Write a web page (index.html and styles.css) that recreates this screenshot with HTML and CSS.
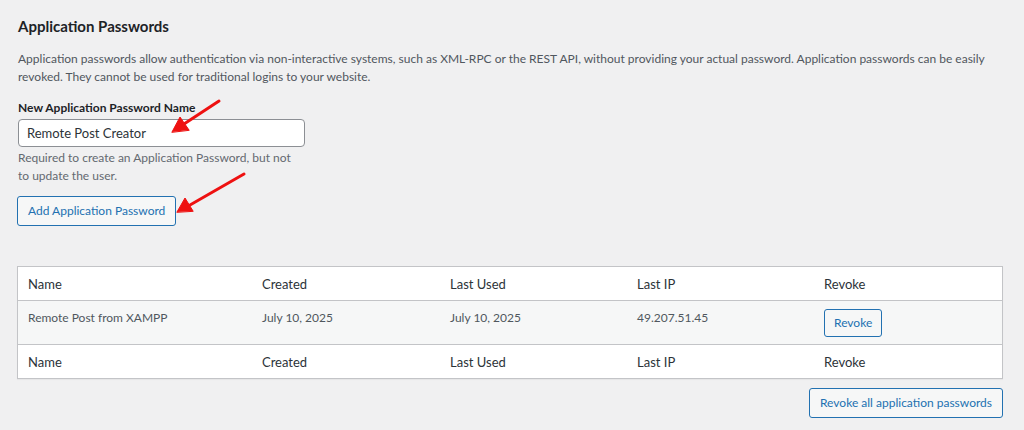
FILE: index.html
```html
<!DOCTYPE html>
<html>
<head>
<meta charset="utf-8">
<link rel="stylesheet" href="styles.css">
</head>
<body>
<div class="wrap">
  <h2 class="title">Application Passwords</h2>
  <p class="desc">Application passwords allow authentication via non-interactive systems, such as XML-RPC or the REST API, without providing your actual password. Application passwords can be easily revoked. They cannot be used for traditional logins to your website.</p>
  <div class="new-form">
    <label class="label">New Application Password Name</label>
    <div class="input">Remote Post Creator</div>
    <p class="help">Required to create an Application Password, but not to update the user.</p>
    <button class="btn">Add Application Password</button>
  </div>
  <table class="list">
    <thead>
      <tr><th class="c1">Name</th><th class="c2">Created</th><th class="c3">Last Used</th><th class="c4">Last IP</th><th class="c5">Revoke</th></tr>
    </thead>
    <tbody>
      <tr><td>Remote Post from XAMPP</td><td>July 10, 2025</td><td>July 10, 2025</td><td>49.207.51.45</td><td><button class="btn small">Revoke</button></td></tr>
    </tbody>
    <tfoot>
      <tr><th>Name</th><th>Created</th><th>Last Used</th><th>Last IP</th><th>Revoke</th></tr>
    </tfoot>
  </table>
  <div class="actions"><button class="btn">Revoke all application passwords</button></div>
</div>
<svg class="arrows" width="1024" height="430" viewBox="0 0 1024 430">
  <g stroke="#ee1111" stroke-width="3" stroke-linecap="round" fill="#ee1111">
    <line x1="219" y1="101" x2="184" y2="124"/>
    <polygon points="172,132 180,117 189,130" stroke-width="1"/>
    <line x1="244" y1="174" x2="190" y2="205"/>
    <polygon points="177,212 185,198 193,211" stroke-width="1"/>
  </g>
</svg>
</body>
</html>
```
FILE: styles.css
```css
html, body { margin: 0; padding: 0; }
body {
  background: #f0f0f1;
  font-family: Lato, "Noto Sans", sans-serif;
  font-size: 12px;
  color: #3c434a;
  width: 1024px;
  height: 430px;
  overflow: hidden;
  position: relative;
}
.wrap { padding: 0 22px 0 18px; }
.title {
  margin: 0;
  padding-top: 14px;
  font-size: 15px;
  font-weight: 700;
  color: #1d2327;
  line-height: 24px;
}
.desc {
  margin: 12px 0 0;
  line-height: 18px;
  color: #50575e;
}
.new-form { margin-top: 12px; }
.label {
  display: block;
  font-weight: 700;
  color: #1d2327;
  line-height: 20px;
}
.input {
  box-sizing: border-box;
  width: 287px;
  height: 28px;
  margin-top: 1px;
  border: 1px solid #8c8f94;
  border-radius: 4px;
  background: #fff;
  padding: 0 8px;
  line-height: 26px;
  font-size: 13px;
  color: #2c3338;
}
.help {
  margin: 2px 0 0;
  width: 285px;
  color: #646970;
  line-height: 18px;
}
.btn {
  box-sizing: border-box;
  font-family: inherit;
  font-size: 12px;
  color: #2271b1;
  border: 1px solid #2271b1;
  background: #f6f7f7;
  border-radius: 3px;
  padding: 0 10px;
  height: 30px;
  line-height: 28px;
  margin: 0;
  cursor: pointer;
  display: block;
}
.new-form .btn { margin-top: 11px; margin-left: -1px; }
.list {
  margin-top: 40px;
  margin-left: -1px;
  width: 986px;
  border-collapse: collapse;
  background: #fff;
  border: 1px solid #c3c4c7;
  box-shadow: 0 1px 1px rgba(0,0,0,.04);
}
.list th, .list td {
  text-align: left;
  padding: 0 10px;
  font-weight: 400;
}
.list th { font-size: 13px; color: #2c3338; height: 33px; line-height: 18px; }
.list thead tr { border-bottom: 1px solid #c3c4c7; }
.list tfoot tr { border-top: 1px solid #c3c4c7; }
.list tbody tr { background: #f6f7f7; }
.list td {
  height: 35px;
  vertical-align: top;
  padding-top: 8px;
  line-height: 18px;
  color: #50575e;
  font-size: 12px;
}
.c1 { width: 214px; }
.c2 { width: 168px; }
.c3 { width: 167px; }
.c4 { width: 167px; }
.btn.small { height: 28px; line-height: 26px; padding: 0 9px; }
.actions { display: flex; justify-content: flex-end; margin-top: 9px; width: 985px; }
.arrows { position: absolute; left: 0; top: 0; pointer-events: none; }
```
